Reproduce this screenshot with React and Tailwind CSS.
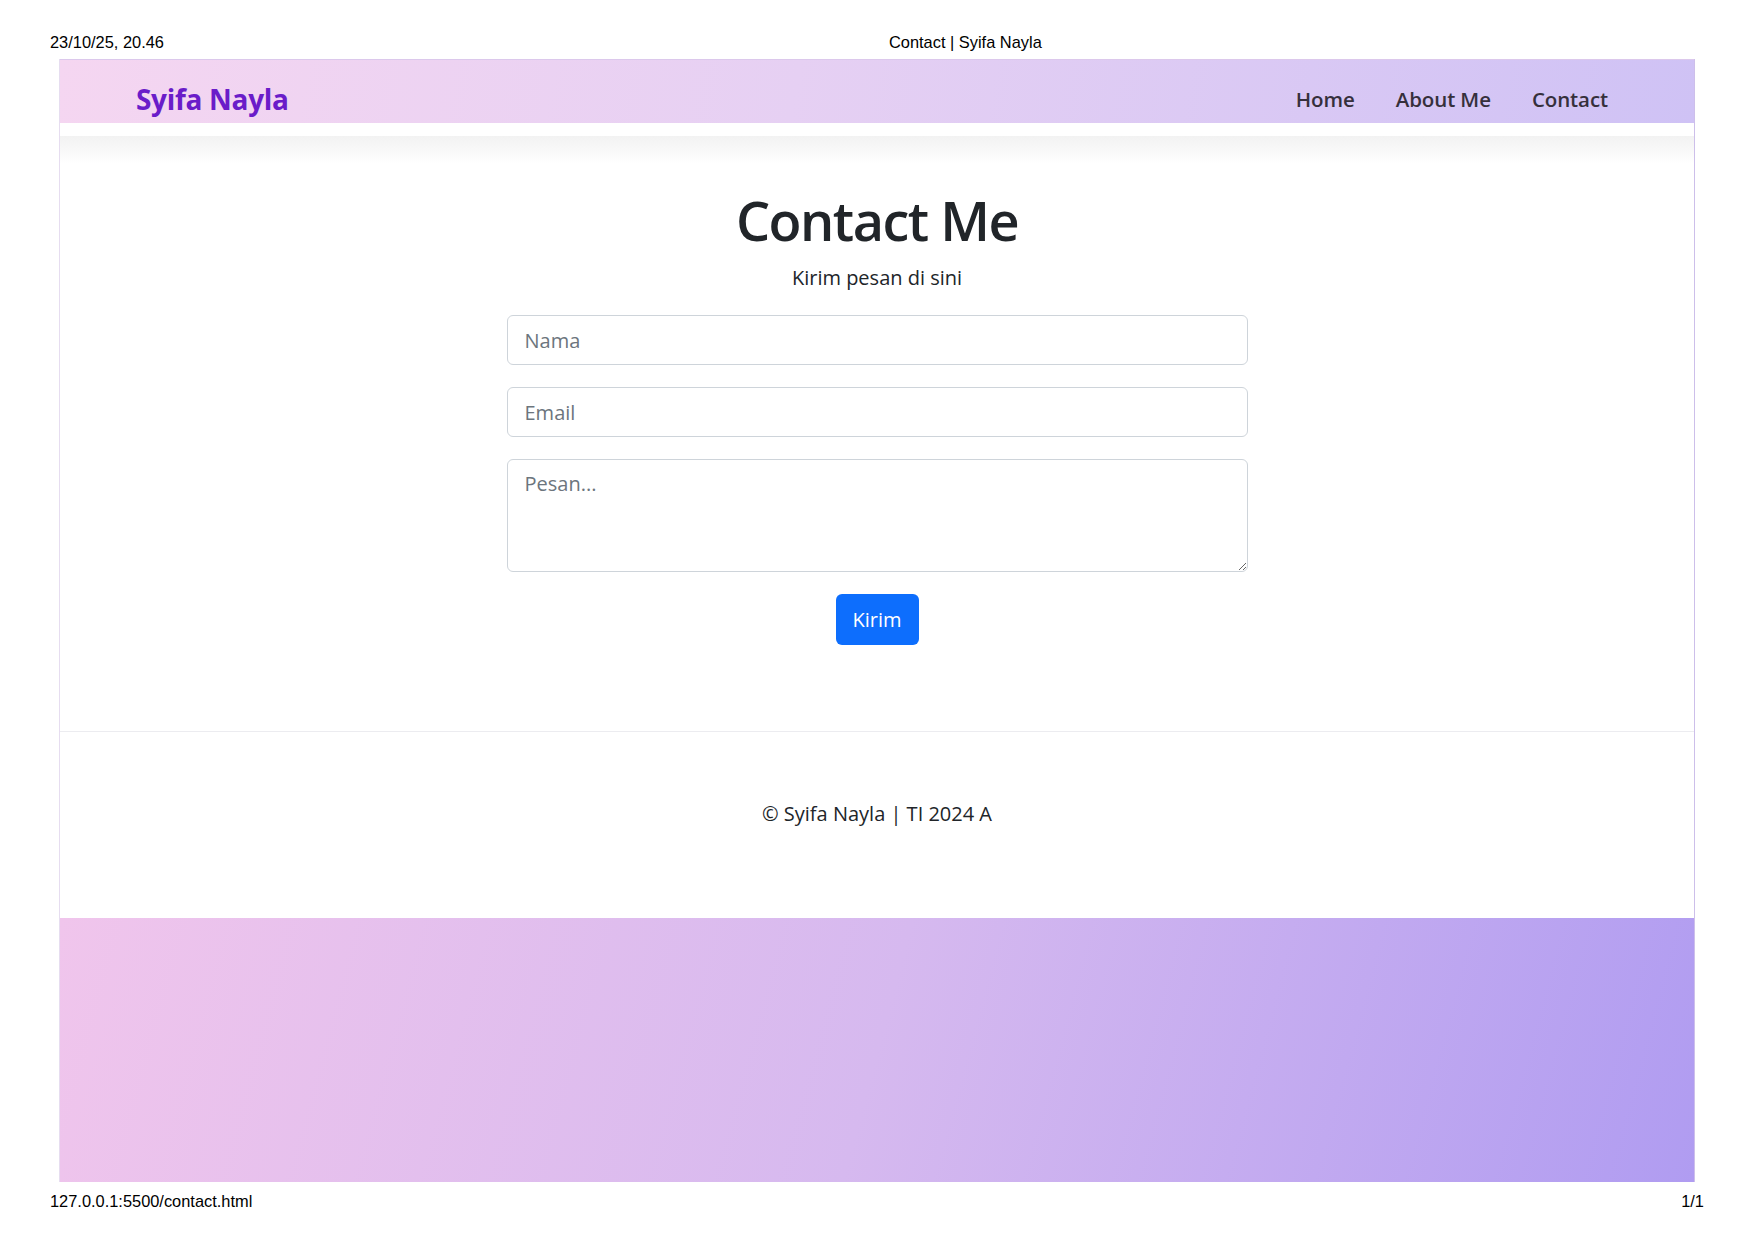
import { useState } from "react"

const font = { fontFamily: '"Open Sans", "Noto Sans", sans-serif' }

const Field = ({ placeholder, type = "text" }) => (
    <input
        type={type}
        placeholder={placeholder}
        className="w-full h-[50px] px-[17px] rounded-[6px] border border-[#ced4da] bg-white text-[20px] text-[#212529] placeholder:text-[#6c757d] outline-none"
    />
)

const App = () => {
    const [pesan, setPesan] = useState("")

    return (
        <div className="w-[1754px] h-[1240px] bg-white flex flex-col" style={font}>
            {/* print header */}
            <div className="h-[59px] flex pl-[50px] pt-[32px] text-[16.4px] leading-[20px] text-black font-['Liberation_Sans',Arial,sans-serif]">
                <span className="w-[839px]">23/10/25, 20.46</span>
                <span>Contact | Syifa Nayla</span>
            </div>

            <div className="mx-[59px] h-[1123px] flex flex-col border-l border-l-[#e6ddf0] border-r border-r-[#cdbfea]">
                <nav className="h-[64px] shrink-0 flex items-center justify-between pt-[14px] pl-[76px] pr-[86px] border-t border-t-[#dcc8ec] bg-[linear-gradient(100deg,#f5d6f1,#e6d0f3_45%,#cfc2f5)]">
                    <a className="text-[28px] leading-[42px] font-bold text-[#6a1cc9] tracking-[-0.3px]">Syifa Nayla</a>
                    <div className="flex gap-[41px] text-[20.5px] leading-[30px] font-semibold text-[#36303c] tracking-[-0.1px]">
                        <a>Home</a>
                        <a>About Me</a>
                        <a>Contact</a>
                    </div>
                </nav>

                <div className="h-[13px] shrink-0 bg-white"></div>

                <main className="h-[595px] shrink-0 flex flex-col items-center pt-[51px] bg-[linear-gradient(to_bottom,#f2f2f2,#ffffff_28px)]">
                    <h1 className="text-[54px] leading-[67px] font-semibold text-[#212529] tracking-[-1.5px]">Contact Me</h1>
                    <p className="mt-[9px] text-[20px] leading-[30px] text-[#212529]">Kirim pesan di sini</p>
                    <form className="mt-[22px] w-[741px] flex flex-col items-center gap-[22px]" onSubmit={(e) => e.preventDefault()}>
                        <Field placeholder="Nama" />
                        <Field placeholder="Email" type="email" />
                        <textarea
                            placeholder="Pesan..."
                            value={pesan}
                            onChange={(e) => setPesan(e.target.value)}
                            className="w-full h-[113px] px-[17px] py-[9px] rounded-[6px] border border-[#ced4da] bg-white text-[20px] leading-[30px] text-[#212529] placeholder:text-[#6c757d] outline-none"
                        />
                        <button className="w-[83px] h-[51px] rounded-[6px] bg-[#0d6efd] text-white text-[20px]">Kirim</button>
                    </form>
                </main>

                <footer className="h-[187px] shrink-0 border-t border-t-[#ececf0] bg-white pt-[67px] text-center text-[20px] leading-[30px] text-[#212529]">
                    © Syifa Nayla | TI 2024 A
                </footer>

                <div className="flex-1 bg-[linear-gradient(105deg,#f0c5ec,#d6b9ef_50%,#b09cf1)]"></div>
            </div>

            {/* print footer */}
            <div className="flex justify-between pl-[50px] pr-[50px] pt-[9px] text-[16.4px] leading-[20px] text-black font-['Liberation_Sans',Arial,sans-serif]">
                <span>127.0.0.1:5500/contact.html</span>
                <span>1/1</span>
            </div>
        </div>
    )
}

export default App
